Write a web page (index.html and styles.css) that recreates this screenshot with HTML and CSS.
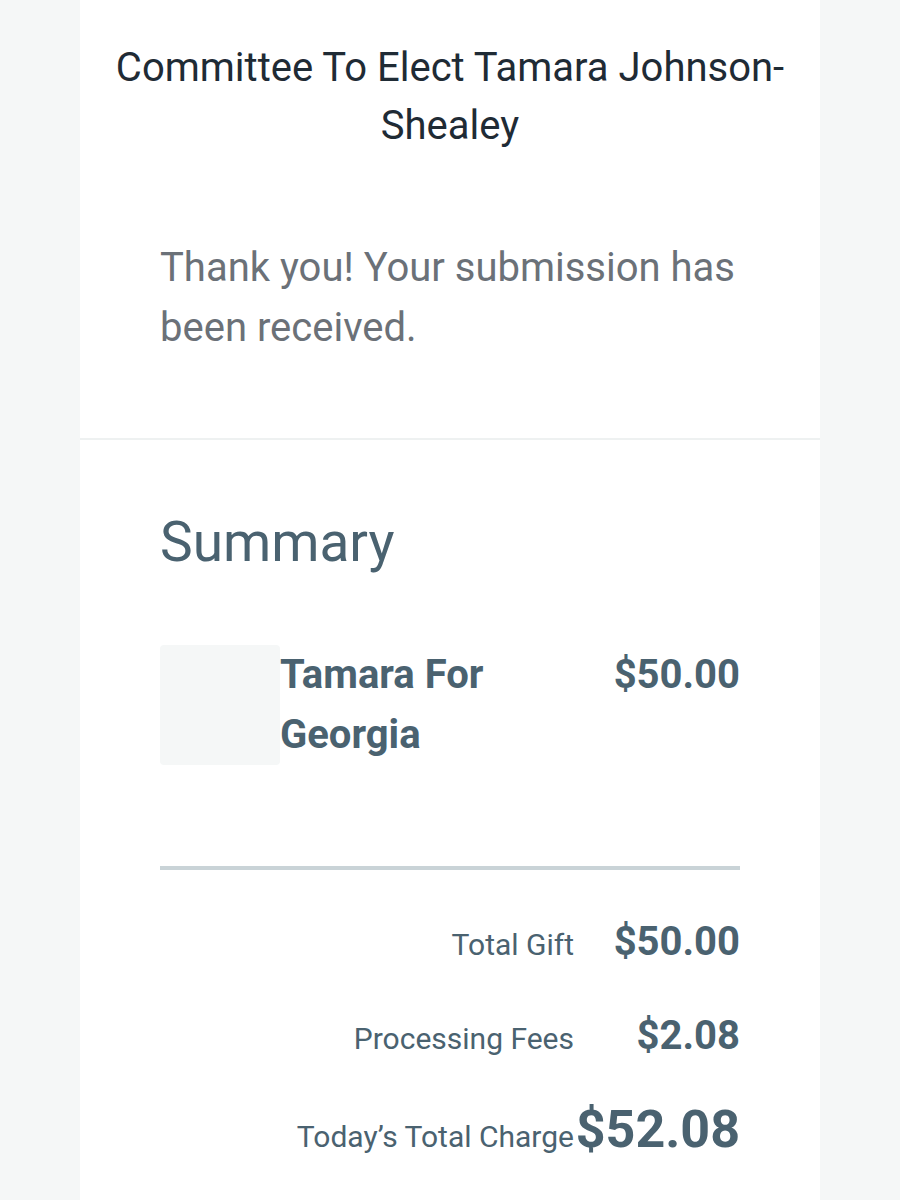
FILE: index.html
```html
<!DOCTYPE html>
<html lang="en">
<head>
<meta charset="utf-8">
<title>Confirmation</title>
<link rel="stylesheet" href="styles.css">
</head>
<body>
<main class="card">
  <section class="head">
    <h1 class="org">Committee To Elect Tamara Johnson-Shealey</h1>
    <p class="thanks">Thank you! Your submission has been received.</p>
  </section>
  <section class="summary">
    <h2 class="summary-title">Summary</h2>
    <div class="item">
      <div class="thumb"></div>
      <div class="item-name">Tamara For Georgia</div>
      <div class="item-price">$50.00</div>
    </div>
    <hr class="rule">
    <div class="totals">
      <div class="t-label">Total Gift</div>
      <div class="t-value">$50.00</div>
      <div class="t-label">Processing Fees</div>
      <div class="t-value">$2.08</div>
      <div class="t-label">Today’s Total Charge</div>
      <div class="t-value big">$52.08</div>
    </div>
  </section>
</main>
</body>
</html>
```

FILE: styles.css
```css
html, body {
  margin: 0;
  padding: 0;
  background: #f5f7f7;
  font-family: Roboto, "Liberation Sans", sans-serif;
}
.card {
  width: 740px;
  margin: 0 auto;
  background: #ffffff;
  min-height: 1200px;
}
.head {
  padding: 39px 20px 80px;
  border-bottom: 2px solid #eef1f1;
}
.org {
  margin: 0;
  text-align: center;
  font-weight: 400;
  font-size: 40px;
  line-height: 58px;
  color: #1f2b35;
}
.thanks {
  margin: 83px 60px 0;
  font-size: 40px;
  line-height: 60px;
  color: #6b7178;
}
.summary {
  padding: 67px 80px 0;
}
.summary-title {
  margin: 0;
  font-weight: 400;
  font-size: 55px;
  line-height: 70px;
  color: #4a6270;
}
.item {
  display: grid;
  grid-template-columns: 120px 1fr 130px;
  margin-top: 68px;
  color: #4a6270;
}
.thumb {
  width: 120px;
  height: 120px;
  background: #f5f7f7;
  border-radius: 4px;
}
.item-name {
  font-weight: 700;
  font-size: 40px;
  line-height: 60px;
  padding-right: 90px;
}
.item-price {
  font-weight: 700;
  font-size: 40px;
  line-height: 60px;
  text-align: right;
}
.rule {
  margin: 101px 0 0;
  border: 0;
  height: 4px;
  background: #c9d3d7;
}
.totals {
  display: grid;
  grid-template-columns: 1fr 166px;
  align-items: baseline;
  row-gap: 23px;
  margin-top: 38px;
  color: #4a6270;
}
.t-label {
  text-align: right;
  font-size: 30px;
  line-height: 68px;
}
.t-value {
  text-align: right;
  font-weight: 700;
  font-size: 40px;
  line-height: 68px;
}
.t-value.big {
  font-size: 52px;
}
```
